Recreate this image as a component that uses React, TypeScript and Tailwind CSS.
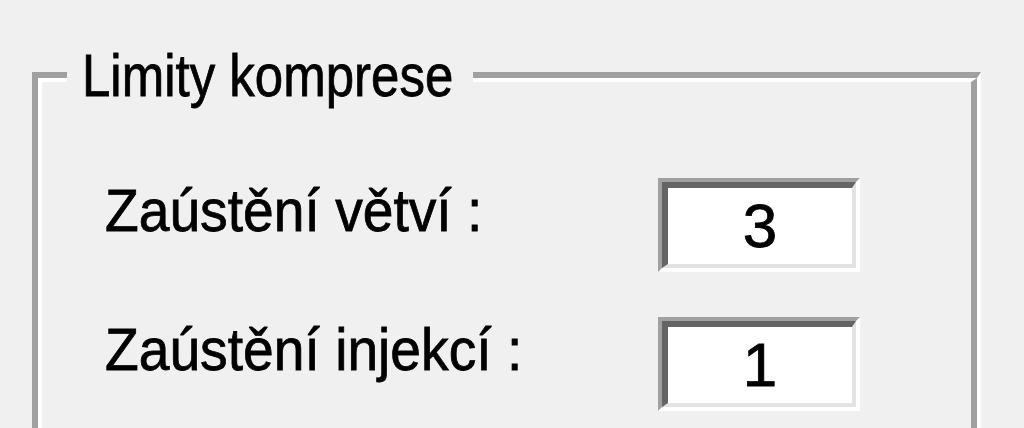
import React from "react";

const font = { fontFamily: '"Liberation Sans", Arial, sans-serif' };

function EditBox({ value }: { value: string }) {
  return (
    <div className="w-[202px] h-[94px] border-t-4 border-l-4 border-r-4 border-b-[4px] border-t-[#a0a0a0] border-l-[#a0a0a0] border-r-white border-b-white">
      <div className="w-full h-full border-t-[6px] border-l-[6px] border-r-4 border-b-4 border-t-[#646464] border-l-[#646464] border-r-[#e3e3e3] border-b-[#e3e3e3] bg-white flex items-center justify-center">
        <span
          className="text-[62px] leading-[62px] text-black [-webkit-text-stroke:0.8px_black]"
          style={font}
        >
          {value}
        </span>
      </div>
    </div>
  );
}

function Row({ label, value }: { label: string; value: string }) {
  return (
    <>
      <div
        className="mt-[3px] origin-left scale-x-[0.92] text-[60px] leading-[60px] text-black whitespace-nowrap [-webkit-text-stroke:0.8px_black]"
        style={font}
      >
        {label}
      </div>
      <EditBox value={value} />
    </>
  );
}

export default function App() {
  return (
    <div className="w-[1024px] h-[428px] overflow-hidden bg-[#f0f0f0] pl-[32px] pt-[72px]">
      {/* etched group box: dark outer line, white inner line */}
      <div className="relative w-[949px] h-[420px] border-t-[6px] border-l-[6px] border-r-4 border-b-4 border-t-[#a0a0a0] border-l-[#a0a0a0] border-r-white border-b-white">
        <div className="w-full h-full border-t-4 border-l-4 border-r-[6px] border-b-[6px] border-t-white border-l-white border-r-[#a0a0a0] border-b-[#a0a0a0] pl-[63px] pt-[96px]">
          <div className="grid grid-cols-[553px_202px] gap-y-[45px] items-start">
            <Row label="Zaústění větví :" value="3" />
            <Row label="Zaústění injekcí :" value="1" />
          </div>
        </div>
        {/* caption sits over the top edge of the frame */}
        <div className="absolute left-[29px] top-[-32px] w-[406px] h-[60px] bg-[#f0f0f0] pl-[15px]">
          <div
            className="origin-left scale-x-[0.85] text-[60px] leading-[60px] text-black whitespace-nowrap [-webkit-text-stroke:0.8px_black]"
            style={font}
          >
            Limity komprese
          </div>
        </div>
      </div>
    </div>
  );
}
